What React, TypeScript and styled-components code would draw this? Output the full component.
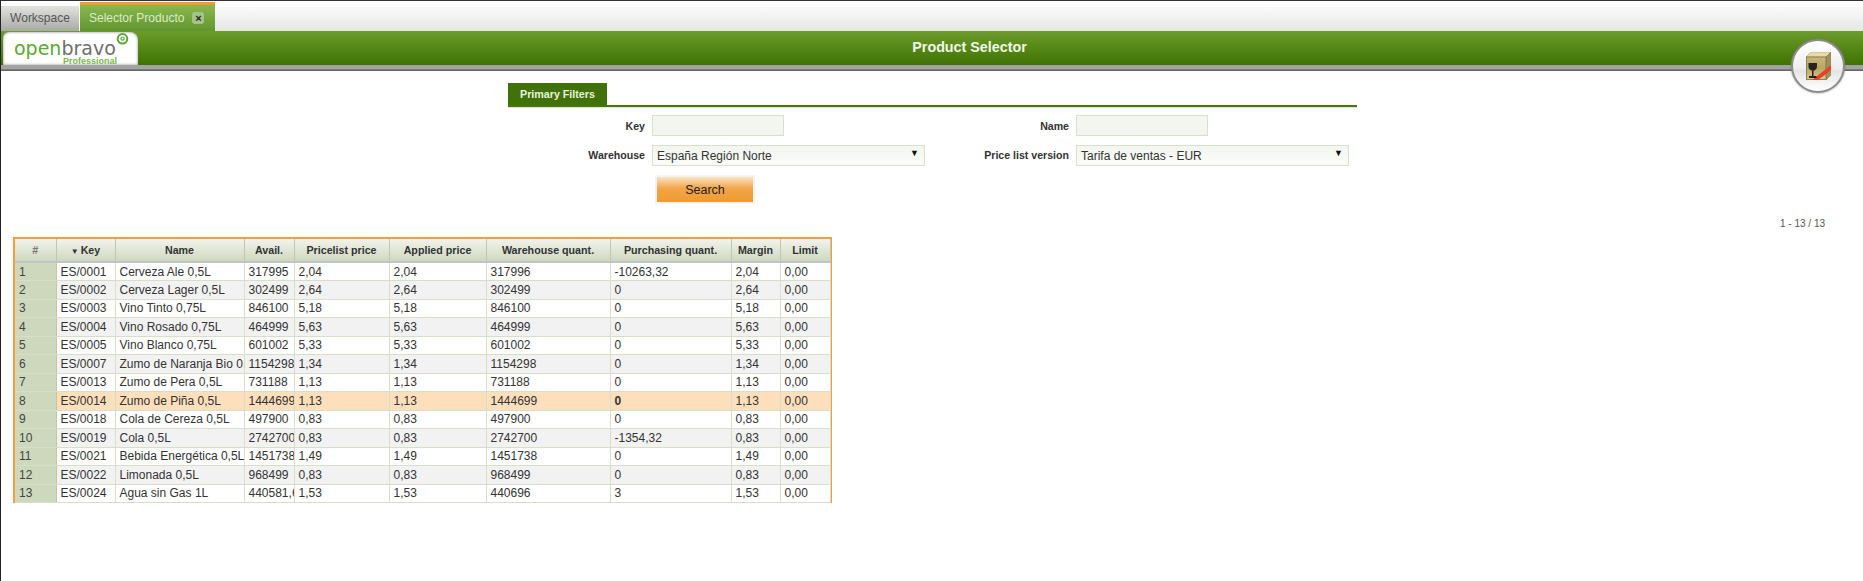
import React from "react";
import styled, { createGlobalStyle } from "styled-components";

const GlobalStyle = createGlobalStyle`
  html, body {
    margin: 0;
    padding: 0;
    background: #fff;
    font-family: "Liberation Sans", Arial, sans-serif;
    overflow: hidden;
  }
`;

const Page = styled.div`
  width: 1863px;
  height: 581px;
  box-sizing: border-box;
  border-top: 1px solid #333;
  border-left: 1px solid #222;
  position: relative;
  overflow: hidden;
`;

const TabStrip = styled.div`
  display: flex;
  height: 30px;
  padding-top: 1px;
  box-sizing: border-box;
  background: linear-gradient(#ffffff, #e6e6e6);
`;

const WorkspaceTab = styled.div`
  width: 78px;
  margin-top: 4px;
  border-right: 1px solid #fff;
  background: linear-gradient(#e2e2de, #a9aaa6);
  color: #555;
  font-size: 12px;
  display: flex;
  align-items: center;
  justify-content: center;
  padding-bottom: 2px;
`;

const ActiveTab = styled.div`
  width: 135px;
  border-top: 3px solid #f39a35;
  background: linear-gradient(#8ab84f, #62952f);
  color: #dcebc6;
  font-size: 12px;
  display: flex;
  align-items: center;
  gap: 8px;
  padding: 0 0 1px 9px;
  box-sizing: border-box;
`;

const CloseBox = styled.span`
  width: 12px;
  height: 12px;
  border-radius: 3px;
  background: #a4c587;
  color: #222;
  font-size: 11px;
  line-height: 12px;
  text-align: center;
  font-weight: 700;
`;

const TitleBar = styled.div`
  height: 34px;
  background: linear-gradient(#6b9c2d, #3f7300);
  display: flex;
  align-items: stretch;
  padding-left: 2px;
`;

const LogoPlate = styled.div`
  width: 135px;
  margin-top: 1px;
  background: #fff;
  border-radius: 6px 8px 0 0;
  box-shadow: inset 0 0 3px #888;
  position: relative;
  padding: 7px 0 0 11px;
  box-sizing: border-box;
  line-height: 1;
`;

const LogoWord = styled.div`
  font-family: "DejaVu Sans", sans-serif;
  font-size: 19px;
  line-height: 18px;
  color: #6e6e6e;
  span {
    color: #58a92f;
  }
`;

const LogoEdition = styled.div`
  font-size: 9px;
  font-weight: 700;
  color: #74b84c;
  text-align: right;
  padding-right: 21px;
  line-height: 9px;
`;

const LogoSwirl = styled.svg`
  position: absolute;
  top: 0;
  right: 9px;
`;

const BarTitle = styled.div`
  flex: 1;
  color: #f2f6ea;
  font-size: 14.3px;
  font-weight: 700;
  text-align: center;
  line-height: 33px;
  padding-right: 62px;
`;

const GreyStrip = styled.div`
  height: 6px;
  background: linear-gradient(#a3a3a3 0, #a3a3a3 4px, #555 5px, #777 6px);
`;

const RoundButton = styled.div`
  position: absolute;
  left: 1790px;
  top: 38px;
  width: 54px;
  height: 54px;
  box-sizing: border-box;
  border-radius: 50%;
  border: 2px solid #8b8b8b;
  background: linear-gradient(#ffffff, #eeeeee 55%, #e4e4e4 60%, #fff);
  box-shadow: 0 0 2px #777;
  display: flex;
  align-items: center;
  justify-content: center;
`;

const FilterArea = styled.section`
  width: 849px;
  margin: 12px 0 0 507px;
`;

const FilterTabs = styled.div`
  border-bottom: 2px solid #46760c;
  box-shadow: 0 1px 0 #dfe7d2;
  height: 22px;
`;

const FilterTab = styled.div`
  width: 99px;
  height: 22px;
  box-sizing: border-box;
  background: #41720a;
  color: #e9f1dc;
  font-size: 10.7px;
  font-weight: 700;
  text-align: center;
  line-height: 22px;
`;

const FilterGrid = styled.div`
  display: grid;
  grid-template-columns: 144px 280px 144px 273px;
  grid-template-rows: 21px 22px;
  row-gap: 8px;
  margin-top: 8px;
  align-items: center;
`;

const FieldLabel = styled.label`
  text-align: right;
  padding-right: 7px;
  font-size: 10.6px;
  font-weight: 700;
  color: #333;
`;

const TextField = styled.div`
  width: 132px;
  height: 21px;
  box-sizing: border-box;
  background: #f3f6ef;
  border: 1px solid #d9e1cc;
`;

const SelectField = styled.div`
  width: 273px;
  height: 21px;
  box-sizing: border-box;
  background: linear-gradient(#f3f6ef, #fbfcf9);
  border: 1px solid #d9e1cc;
  color: #333;
  font-size: 12px;
  line-height: 21px;
  padding-left: 4px;
  display: flex;
  justify-content: space-between;
`;

const Caret = styled.span`
  font-size: 9px;
  line-height: 15px;
  color: #111;
  padding-right: 5px;
`;

const SearchRow = styled.div`
  margin: 9px 0 0 147px;
`;

const SearchButton = styled.button`
  display: block;
  width: 100px;
  height: 29px;
  box-sizing: border-box;
  border: 2px solid #f3f3f1;
  background: linear-gradient(#fbe3c6, #f3a649 45%, #f19a30);
  color: #222;
  font-family: "Liberation Sans", Arial, sans-serif;
  font-size: 12.5px;
  padding: 0;
`;

const Paging = styled.div`
  margin: 12px 38px 0 0;
  height: 15px;
  text-align: right;
  font-size: 10px;
  line-height: 15px;
  color: #555;
`;

const GridFrame = styled.div`
  width: 819px;
  margin: 6px 0 0 12px;
  box-sizing: border-box;
  border: 2px solid #f59c3c;
  border-bottom: 0;
`;

const Table = styled.table`
  table-layout: fixed;
  width: 815px;
  border-collapse: collapse;
  font-size: 12px;
  color: #333;
`;

const HeadCell = styled.th<{ $muted?: boolean }>`
  height: 23px;
  padding: 0;
  box-sizing: border-box;
  background: linear-gradient(#f1f3ec, #cfd8bf);
  border-right: 1px solid #bfc8af;
  border-bottom: 2px solid #c0c4c8;
  font-size: 10.7px;
  font-weight: 700;
  text-align: center;
  color: ${(p) => (p.$muted ? "#777" : "#333")};
`;

const SortMark = styled.span`
  font-size: 8px;
  margin-right: 2px;
`;

const Row = styled.tr<{ $alt: boolean; $selected: boolean }>`
  height: 18.5px;
  background: ${(p) => (p.$selected ? "#fedfbc" : p.$alt ? "#f2f2f2" : "#ffffff")};
`;

const Cell = styled.td<{ $bold?: boolean }>`
  padding: 0 0 0 4px;
  height: 18.5px;
  box-sizing: border-box;
  border-right: 1px solid #d7dfc9;
  border-bottom: 1px solid #d7dfc9;
  white-space: nowrap;
  overflow: hidden;
  font-weight: ${(p) => (p.$bold ? 700 : 400)};
`;

const IndexCell = styled.td`
  padding: 0 0 0 4px;
  height: 18.5px;
  box-sizing: border-box;
  background: #cdd8bc;
  border-right: 1px solid #bfc8af;
  border-bottom: 1px solid #d7dfc9;
  color: #444;
`;

const columns: { title: string; width: number }[] = [
  { title: "#", width: 41 },
  { title: "Key", width: 59 },
  { title: "Name", width: 129 },
  { title: "Avail.", width: 50 },
  { title: "Pricelist price", width: 95 },
  { title: "Applied price", width: 97 },
  { title: "Warehouse quant.", width: 124 },
  { title: "Purchasing quant.", width: 121 },
  { title: "Margin", width: 49 },
  { title: "Limit", width: 50 },
];

const rows: string[][] = [
  ["ES/0001", "Cerveza Ale 0,5L", "317995", "2,04", "2,04", "317996", "-10263,32", "2,04", "0,00"],
  ["ES/0002", "Cerveza Lager 0,5L", "302499", "2,64", "2,64", "302499", "0", "2,64", "0,00"],
  ["ES/0003", "Vino Tinto 0,75L", "846100", "5,18", "5,18", "846100", "0", "5,18", "0,00"],
  ["ES/0004", "Vino Rosado 0,75L", "464999", "5,63", "5,63", "464999", "0", "5,63", "0,00"],
  ["ES/0005", "Vino Blanco 0,75L", "601002", "5,33", "5,33", "601002", "0", "5,33", "0,00"],
  ["ES/0007", "Zumo de Naranja Bio 0,5L", "1154298", "1,34", "1,34", "1154298", "0", "1,34", "0,00"],
  ["ES/0013", "Zumo de Pera 0,5L", "731188", "1,13", "1,13", "731188", "0", "1,13", "0,00"],
  ["ES/0014", "Zumo de Piña 0,5L", "1444699", "1,13", "1,13", "1444699", "0", "1,13", "0,00"],
  ["ES/0018", "Cola de Cereza 0,5L", "497900", "0,83", "0,83", "497900", "0", "0,83", "0,00"],
  ["ES/0019", "Cola 0,5L", "2742700", "0,83", "0,83", "2742700", "-1354,32", "0,83", "0,00"],
  ["ES/0021", "Bebida Energética 0,5L", "1451738", "1,49", "1,49", "1451738", "0", "1,49", "0,00"],
  ["ES/0022", "Limonada 0,5L", "968499", "0,83", "0,83", "968499", "0", "0,83", "0,00"],
  ["ES/0024", "Agua sin Gas 1L", "440581,68", "1,53", "1,53", "440696", "3", "1,53", "0,00"],
];

const SELECTED_ROW = 7;

const App: React.FC = () => (
  <Page>
    <GlobalStyle />
    <TabStrip>
      <WorkspaceTab>Workspace</WorkspaceTab>
      <ActiveTab>
        Selector Producto
        <CloseBox>×</CloseBox>
      </ActiveTab>
    </TabStrip>
    <TitleBar>
      <LogoPlate>
        <LogoWord>
          <span>open</span>bravo
        </LogoWord>
        <LogoEdition>Professional</LogoEdition>
        <LogoSwirl width="13" height="13" viewBox="0 0 13 13">
          <circle cx="6.5" cy="6.8" r="4.8" fill="none" stroke="#58a92f" strokeWidth="2" />
          <circle cx="6.5" cy="6.6" r="1.6" fill="none" stroke="#58a92f" strokeWidth="1.2" />
        </LogoSwirl>
      </LogoPlate>
      <BarTitle>Product Selector</BarTitle>
    </TitleBar>
    <GreyStrip />
    <RoundButton>
      <svg width="25" height="28" viewBox="0 0 25 28">
        <defs>
          <linearGradient id="boxFront" x1="0" y1="0" x2="0" y2="1">
            <stop offset="0" stopColor="#c9b878" />
            <stop offset="0.5" stopColor="#b9a765" />
            <stop offset="1" stopColor="#d9c985" />
          </linearGradient>
        </defs>
        <path d="M0 5 L5 0 H25 L20 5 Z" fill="#e6dcaa" stroke="#a39560" strokeWidth="0.5" />
        <path d="M20 5 L25 0 V23 L20 28 Z" fill="#a2915c" stroke="#7d7045" strokeWidth="0.5" />
        <rect x="0.5" y="5" width="19.5" height="22.5" fill="url(#boxFront)" stroke="#7d7045" strokeWidth="0.8" />
        <path d="M20 17 L25 13 V18 L20 22 L12 28 H6 Z" fill="#e5402c" />
        <path d="M2.5 11 H11 V14.5 C11 17 9 18.5 7.5 18.5 V24 H10.5 V26 H3 V24 H6 V18.5 C4.5 18.5 2.5 17 2.5 14.5 Z" fill="#26251e" />
      </svg>
    </RoundButton>

    <FilterArea>
      <FilterTabs>
        <FilterTab>Primary Filters</FilterTab>
      </FilterTabs>
      <FilterGrid>
        <FieldLabel>Key</FieldLabel>
        <TextField />
        <FieldLabel>Name</FieldLabel>
        <TextField />
        <FieldLabel>Warehouse</FieldLabel>
        <SelectField>
          España Región Norte
          <Caret>▼</Caret>
        </SelectField>
        <FieldLabel>Price list version</FieldLabel>
        <SelectField>
          Tarifa de ventas - EUR
          <Caret>▼</Caret>
        </SelectField>
      </FilterGrid>
      <SearchRow>
        <SearchButton>Search</SearchButton>
      </SearchRow>
    </FilterArea>

    <Paging>1 - 13 / 13</Paging>

    <GridFrame>
      <Table>
        <colgroup>
          {columns.map((c) => (
            <col key={c.title} width={c.width} />
          ))}
        </colgroup>
        <thead>
          <tr>
            {columns.map((c) => (
              <HeadCell key={c.title} $muted={c.title === "#"}>
                {c.title === "Key" && <SortMark>▼</SortMark>}
                {c.title}
              </HeadCell>
            ))}
          </tr>
        </thead>
        <tbody>
          {rows.map((r, i) => (
            <Row key={r[0]} $alt={i % 2 === 1} $selected={i === SELECTED_ROW}>
              <IndexCell>{i + 1}</IndexCell>
              {r.map((value, j) => (
                <Cell key={j} $bold={i === SELECTED_ROW && j === 6}>
                  {value}
                </Cell>
              ))}
            </Row>
          ))}
        </tbody>
      </Table>
    </GridFrame>
  </Page>
);

export default App;
